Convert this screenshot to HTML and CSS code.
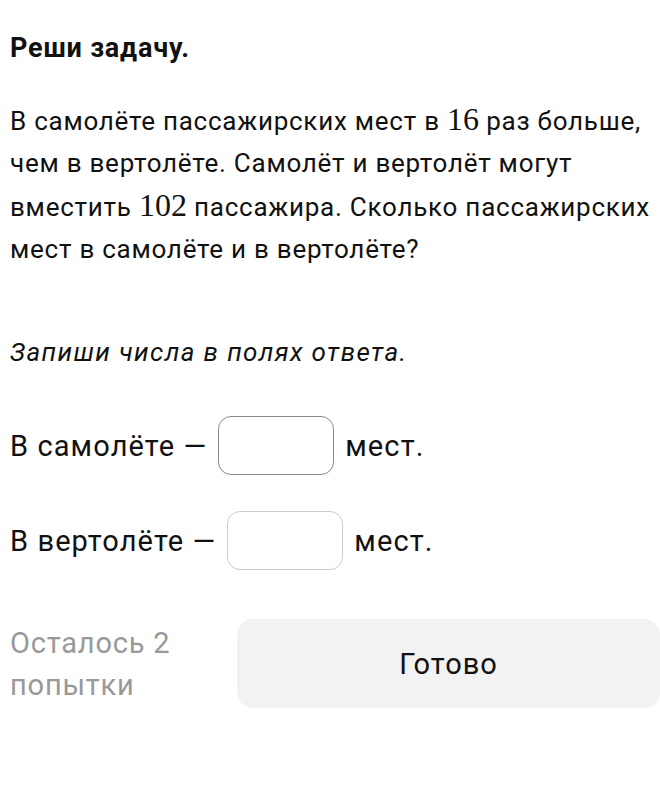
FILE: index.html
```html
<!DOCTYPE html>
<html lang="ru">
<head>
  <meta charset="UTF-8" />
  <meta name="viewport" content="width=device-width, initial-scale=1.0"/>
  <title>Реши задачу</title>
  <link rel="stylesheet" href="styles.css">
</head>
<body>
  <div class="task">
    <h2 class="task-title">Реши задачу.</h2>

    <p class="task-text">
      В самолёте пассажирских мест в <span class="num">16</span> раз больше,<br>
      чем в вертолёте. Самолёт и вертолёт могут<br>
      вместить <span class="num">102</span> пассажира. Сколько пассажирских<br>
      мест в самолёте и в вертолёте?
    </p>

    <p class="hint">Запиши числа в полях ответа.</p>

    <div class="answer-row">
      <span>В самолёте —</span>
      <input type="text" class="answer-input dark" />
      <span>мест.</span>
    </div>

    <div class="answer-row">
      <span>В вертолёте —</span>
      <input type="text" class="answer-input" />
      <span>мест.</span>
    </div>

    <div class="footer">
      <div class="attempts">Осталось 2 попытки</div>
      <button class="done-btn">Готово</button>
    </div>
  </div>
</body>
</html>
```

FILE: styles.css
```css
body {
  margin: 0;
  background: #fff;
  font-family: Roboto, "Noto Sans", sans-serif;
  color: #111;
}

.task {
  padding: 0 0 0 10px;
}

.task-title {
  margin: 0;
  padding-top: 32px;
  font-size: 27px;
  line-height: 32px;
  font-weight: 700;
  letter-spacing: 0.8px;
}

.task-text {
  margin: 34px 0 0;
  font-size: 26px;
  line-height: 42px;
  letter-spacing: 0.75px;
  white-space: nowrap;
}

.num {
  font-family: "Liberation Serif", serif;
  font-size: 32px;
  letter-spacing: 0;
}

.hint {
  margin: 64px 0 0;
  font-size: 26px;
  line-height: 36px;
  font-style: italic;
  letter-spacing: 1.4px;
}

.answer-row {
  display: flex;
  align-items: center;
  gap: 11px;
  font-size: 29px;
  letter-spacing: 1.1px;
}

.hint + .answer-row {
  margin-top: 46px;
}

.answer-row + .answer-row {
  margin-top: 36px;
}

.answer-input {
  width: 116px;
  height: 59px;
  box-sizing: border-box;
  border: 1px solid #ccc;
  border-radius: 13px;
  font-size: 24px;
  outline: none;
}

.answer-input.dark {
  border-color: #888;
}

.footer {
  display: flex;
  align-items: center;
  gap: 50px;
  margin-top: 49px;
}

.attempts {
  width: 177px;
  color: #999;
  font-size: 29px;
  line-height: 42px;
  letter-spacing: 0.8px;
}

.done-btn {
  flex: 1;
  height: 89px;
  border: none;
  border-radius: 16px;
  background: #f2f2f2;
  color: #111;
  font-family: Roboto, "Noto Sans", sans-serif;
  font-size: 29px;
  letter-spacing: 1px;
  cursor: pointer;
}
```
